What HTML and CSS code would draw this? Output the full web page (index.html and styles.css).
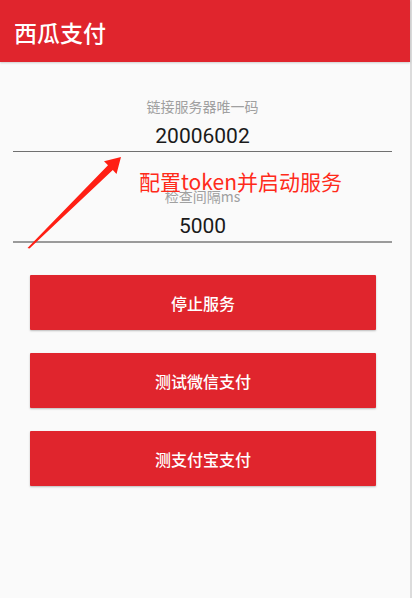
FILE: index.html
```html
<!DOCTYPE html>
<html lang="zh">
<head>
<meta charset="utf-8">
<title>西瓜支付</title>
<link rel="stylesheet" href="styles.css">
</head>
<body>
<div class="screen">
  <header class="appbar"><h1 class="title">西瓜支付</h1></header>
  <main class="content">
    <div class="field">
      <div class="label">链接服务器唯一码</div>
      <div class="value">20006002</div>
    </div>
    <div class="field field-last">
      <div class="label">检查间隔ms</div>
      <div class="value">5000</div>
    </div>
    <div class="buttons">
      <button class="btn">停止服务</button>
      <button class="btn">测试微信支付</button>
      <button class="btn">测支付宝支付</button>
    </div>
    <div class="note">配置token并启动服务</div>
    <svg class="arrow" width="130" height="260" viewBox="0 0 130 260">
      <polygon points="27.5,248 29.5,248.5 112.8,170 116.5,174 121,157 104,161.3 108,165.2" fill="#ff1f14"/>
    </svg>
  </main>
</div>
</body>
</html>
```
FILE: styles.css
```css
html, body {
  margin: 0;
  padding: 0;
  background: #fafafa;
}
body {
  width: 412px;
  height: 598px;
  overflow: hidden;
  font-family: Roboto, "Noto Sans CJK SC", sans-serif;
}
.screen {
  width: 410px;
  height: 598px;
  border-right: 2px solid #dcdcdc;
  background: #fafafa;
  position: relative;
}
.appbar {
  height: 62px;
  background: #e0252d;
  display: flex;
  align-items: center;
  padding-left: 14px;
  box-shadow: 0 1px 2px rgba(0,0,0,0.18);
  position: relative;
  z-index: 1;
}
.title {
  margin: 0;
  font-family: "Noto Sans CJK SC", sans-serif;
  font-size: 23px;
  font-weight: 500;
  color: #fff;
  line-height: 30px;
  margin-top: 2px;
}
.content {
  position: relative;
}
.field {
  margin: 0 18px 0 13px;
  padding-top: 35px;
  border-bottom: 1px solid #707070;
  text-align: center;
}
.field-last {
  border-bottom: 2px solid #9a9a9a;
}
.label {
  font-family: "Noto Sans CJK SC", sans-serif;
  font-size: 14px;
  line-height: 18px;
  color: #a0a0a0;
  margin-bottom: 7px;
}
.value {
  font-family: Roboto, "Noto Sans CJK SC", sans-serif;
  font-size: 21px;
  line-height: 29px;
  color: #1a1a1a;
}
.buttons {
  display: flex;
  flex-direction: column;
  gap: 23px;
  margin: 32px 34px 0 30px;
}
.btn {
  height: 55px;
  border: none;
  border-radius: 1px;
  background: #e0252d;
  color: #fff;
  font-family: "Noto Sans CJK SC", sans-serif;
  font-size: 16px;
  font-weight: 500;
  box-shadow: 0 1px 2px rgba(0,0,0,0.25);
  padding: 0;
}
.note {
  position: absolute;
  left: 139px;
  top: 104px;
  font-family: "Noto Sans CJK SC", sans-serif;
  font-size: 21px;
  line-height: 30px;
  color: #ff2a1a;
  white-space: nowrap;
}
.arrow {
  position: absolute;
  left: 0;
  top: -62px;
}
```
